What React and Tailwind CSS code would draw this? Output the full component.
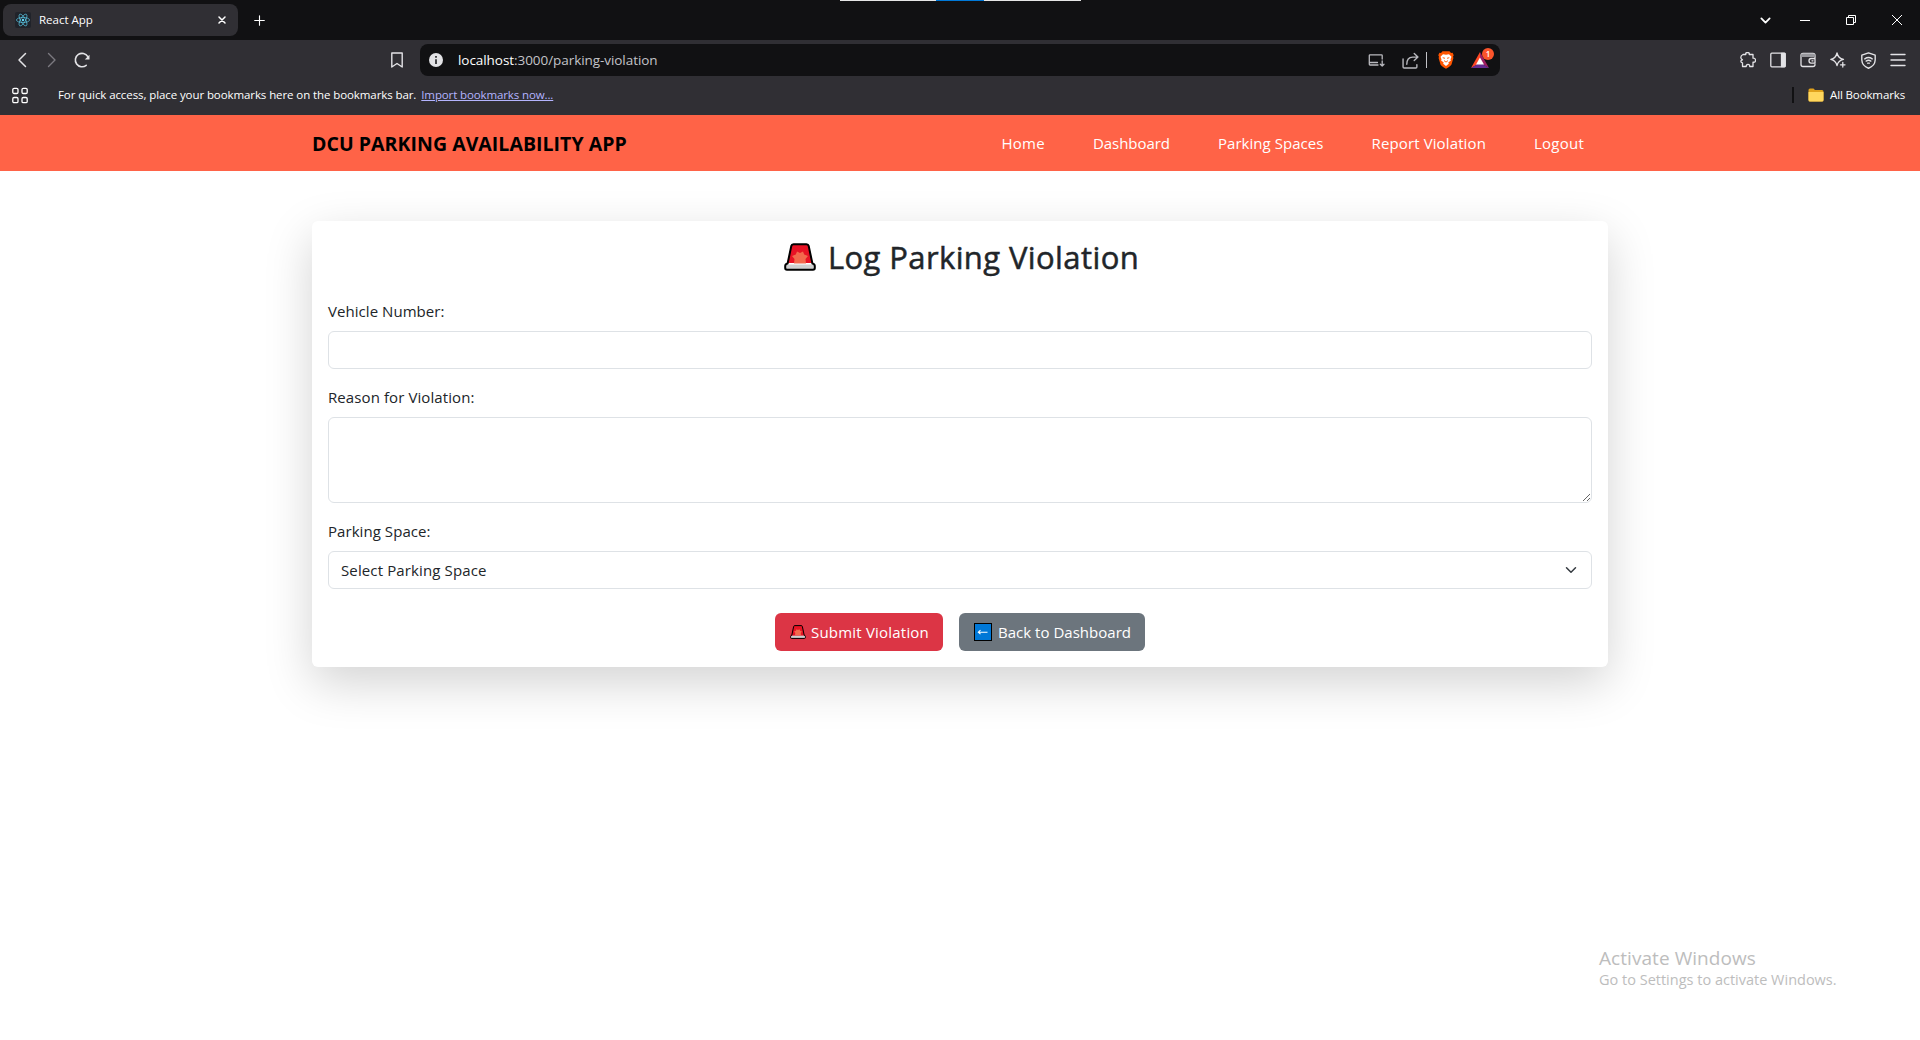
import React from "react";

const T = ({ className = "", children }) => (
  <span className={"inline-block whitespace-nowrap " + className}>{children}</span>
);

function Siren({ className }) {
  return (
    <svg viewBox="0 0 32 28" className={className}>
      <path d="M7.2 2.2Q7.8 1 9.2 1H22.800Q24.200 1 24.800 2.200L28.700 20H3.300Z" fill="#e81224" />
      <path d="M13 8.500 16 10 19 8.500 20.200 11.500 24 13 21.500 16 22 20.500H10L10.500 16 8 13 11.800 11.500Z" fill="#f3694c" />
      <path d="M1.800 21.500H30.200V26H1.800Z" fill="#d0d0d0" />
      <path d="M3.600 20.500 7.300 3Q7.700 1.200 9.500 1.200H22.500Q24.300 1.200 24.700 3L28.400 20.500Q30.800 21 30.800 23V25Q30.800 26.800 29 26.800H3Q1.200 26.800 1.200 25V23Q1.200 21 3.600 20.500Z" fill="none" stroke="#000" strokeWidth="2" strokeLinejoin="round" />
    </svg>
  );
}

function BackArrow() {
  return (
    <svg viewBox="0 0 18 18" className="h-[18px] w-[18px]">
      <rect x=".5" y=".5" width="17" height="17" fill="#0078d7" stroke="#000" />
      <path d="M4.300 9.200H13.500M6.500 7.200 4.300 9.200 6.500 11.200" fill="none" stroke="#fff" strokeWidth="1.100" />
    </svg>
  );
}

function Icon({ className = "h-4 w-4", children, sw = 1.3 }) {
  return (
    <svg viewBox="0 0 16 16" className={"shrink-0 " + className} fill="none" stroke="currentColor" strokeWidth={sw} strokeLinecap="round" strokeLinejoin="round">
      {children}
    </svg>
  );
}

const Cell = ({ children, className = "" }) => (
  <div className={"flex h-8 w-[30px] shrink-0 items-center justify-center " + className}>{children}</div>
);

function TabStrip() {
  return (
    <div className="flex h-10 items-center bg-[#111113] pl-[3px] text-white">
      <div className="flex h-8 w-[235px] items-center rounded-lg bg-[#302f34] pl-3 pr-[12px]">
        <svg viewBox="0 0 16 16" className="h-4 w-4 rounded-xs bg-[#20232a]" fill="none" stroke="#61dafb" strokeWidth=".7" strokeOpacity=".85">
          <ellipse cx="8" cy="8" rx="6.600" ry="2.500" />
          <ellipse cx="8" cy="8" rx="6.600" ry="2.500" transform="rotate(60 8 8)" />
          <ellipse cx="8" cy="8" rx="6.600" ry="2.500" transform="rotate(120 8 8)" />
          <circle cx="8" cy="8" r="1.200" fill="#61dafb" stroke="none" />
        </svg>
        <T className="ml-2 text-[11.5px] leading-4">React App</T>
        <Icon className="ml-auto h-2 w-2" sw={3}><path d="M2 2 14 14M14 2 2 14" /></Icon>
      </div>
      <Icon className="ml-[16px] h-[11px] w-[11px]" sw={1.6}><path d="M8 1V15M1 8H15" /></Icon>
      <div className="mb-auto ml-[575px] flex h-px w-[241px] bg-[#e6e6e6]"><div className="ml-24 w-12 bg-[#0078d7]" /></div>
      <Icon className="ml-[679px] h-[11px] w-[11px]" sw={2.6}><path d="M2 5 8 11 14 5" /></Icon>
      <div className="ml-[29px] h-px w-[10px] bg-white" />
      <svg viewBox="0 0 10 10" className="ml-9 h-[10px] w-[10px]" fill="none" stroke="#fff"><path d="M.5 2.500H7.500V9.500H.5ZM2.500 2.500V.5H9.500V7.500H7.500" /></svg>
      <svg viewBox="0 0 10 10" className="ml-9 h-[10px] w-[10px]" fill="none" stroke="#fff"><path d="M0 0 10 10M10 0 0 10" /></svg>
    </div>
  );
}

function BraveLion() {
  return (
    <svg viewBox="0 0 16 18" className="h-[18px] w-4">
      <path d="M4.500.3H11.500L13 2 14.600 1.800 15.700 4.200 15 5.800 15.400 7 13.500 13.500Q13 14.800 8 17.800 3 14.800 2.500 13.500L.6 7 1 5.800.3 4.200 1.400 1.800 3 2Z" fill="#ff5500" />
      <path d="M5 3.300 8 3.700 11 3.300 13.500 5.800 12.500 8.200 12.800 9.800 10.400 11.300 10.800 12.800 8 15 5.200 12.800 5.600 11.300 3.200 9.800 3.500 8.200 2.500 5.800Z" fill="#fff" />
      <path d="M4.700 6.700 7 7.300M11.300 6.700 9 7.300M6 9.600 8 11.100 10 9.600" fill="none" stroke="#ff5500" strokeWidth=".9" />
    </svg>
  );
}

function Toolbar() {
  return (
    <div className="flex h-10 items-center bg-[#302f34] px-[7px] text-[#e3e3e6]">
      <Cell><Icon className="mr-px h-4 w-4" sw={1.5}><path d="M11.500 1.500 5 8 11.500 14.500" /></Icon></Cell>
      <Cell className="text-[#7b7a80]"><Icon sw={1.400}><path d="M4.500 1.500 11 8 4.500 14.500" /></Icon></Cell>
      <Cell>
        <Icon sw={1.6}><path d="M12.200 13.300A6.700 6.700 0 1 1 13.800 4.600" /><path d="M15.500 2.800V7.600H10.800Z" fill="currentColor" stroke="none" /></Icon>
      </Cell>
      <Cell className="ml-[285px]"><Icon sw={1.400}><path d="M2.800 1H13.200V15L8 11.500 2.800 15Z" /></Icon></Cell>
      <div className="ml-2 flex h-8 w-[1080px] items-center rounded-lg bg-[#111113] pl-2">
        <svg viewBox="0 0 16 16" className="h-4 w-4"><circle cx="8" cy="8" r="7" fill="#e3e3e6" /><path d="M8 4V5.800M8 7.200V12" stroke="#111113" strokeWidth="1.500" /></svg>
        <T className="ml-[14px] text-[13.5px] leading-5 tracking-[-0.06px] text-[#c3c3c8]"><span className="text-white">localhost</span>:3000/parking-violation</T>
        <div className="ml-auto flex items-center pr-[11px] text-[#b9b9be]">
          <Icon className="h-4 w-[17px]"><path d="M9.500 13H1.500Q.8 13 .8 12.300V3.500Q.8 2.800 1.500 2.800H13Q13.700 2.800 13.700 3.500V7M1 10.500H9M13.700 9V14M11.800 12.200 13.700 14 15.500 12.200" /></Icon>
          <Icon className="ml-[17px] h-[17px] w-[17px]"><path d="M1 6.500V14Q1 15 2 15H13Q14 15 14 14V12M4.500 11.500Q4.500 5 10 4.800H14.500M11.500 1.500 15 4.800 11.500 8" /></Icon>
          <div className="ml-[7px] h-4 w-px bg-[#c3c3c8]" />
          <div className="ml-[11px]"><BraveLion /></div>
          <div className="relative ml-[17px] h-[16px] w-[18px]">
            <svg viewBox="0 0 18 16" className="h-4 w-[18px]">
              <path d="M9 0 0 16 9 11Z" fill="#ff4724" /><path d="M9 0 18 16 9 11Z" fill="#9e1f63" /><path d="M0 16H18L9 10.500Z" fill="#662d91" /><path d="M9 5.500 13 12.500H5Z" fill="#fff" />
            </svg>
            <span className="absolute -top-1 left-[11px] flex h-3 w-3 items-center justify-center rounded-full bg-[#fb542b] text-[8px] font-semibold leading-3 text-white">1</span>
          </div>
        </div>
      </div>
      <div className="ml-auto flex">
        <Cell><Icon><path d="M3 2.500H5.800Q5.300.5 7.500.5T9.200 2.500H13V6.200Q15.500 6 15.500 8.300T13 10.200V14.500H9.700Q9.800 12.300 8 12.300T6.200 14.500H2.500V10.800Q.5 10.500 1 9 1 8 2.500 7.800Q.8 6.800.8 5.500.8 3.500 3 2.500Z" /></Icon></Cell>
        <Cell><Icon><rect x=".8" y="1.200" width="14.400" height="13.600" rx="1" /><path d="M11.500 1.500H15V14.500H11.500Z" fill="currentColor" /></Icon></Cell>
        <Cell><Icon><path d="M15 6V3.500Q15 1.500 13 1.500H3Q1 1.500 1 3.500V12.500Q1 14.500 3 14.500H13Q15 14.500 15 12.500M15 6.500H11Q9 6.500 9 8.800T11 11.200H15ZM12 8.800H13" /><path d="M1 5V3Q1 1.500 3 1.500H13Q15 1.500 15 3V5Z" fill="#98989d" stroke="none" /></Icon></Cell>
        <Cell><Icon><path d="M7 1Q8.200 6.400 13.500 7.300 8.200 8.400 7 13.500 5.800 8.400.8 7.300 5.800 6.400 7 1ZM12.800 10.500V15M10.500 12.800H15" /></Icon></Cell>
        <Cell><Icon className="h-[17px] w-[17px]"><path d="M8 .8 14.300 3V7.500Q14 13 8 15.300 2 13 1.700 7.500V3ZM4.500 6.500Q8 4 11.500 6.500M5.800 8.600Q8 7 10.200 8.600M7.200 10.500H8.800" /></Icon></Cell>
        <Cell><Icon sw={1.400}><path d="M1 2.500H15M1 8H15M1 13.500H15" /></Icon></Cell>
      </div>
    </div>
  );
}

function BookmarksBar() {
  return (
    <div className="flex h-[35px] items-center bg-[#302f34] pb-[5px] pl-3 pr-[15px] text-[11.5px] leading-4 text-white">
      <Icon className="h-[17px] w-4" sw={1.300}>
        <rect x=".8" y=".8" width="5.200" height="5.200" rx="1.300" /><rect x="10" y=".8" width="5.200" height="5.200" rx="1.300" /><rect x=".8" y="10" width="5.200" height="5.200" rx="1.300" /><rect x="10" y="10" width="5.200" height="5.200" rx="1.300" />
      </Icon>
      <T className="ml-[30px] tracking-[-0.092px]">For quick access, place your bookmarks here on the bookmarks bar.</T>
      <T className="ml-[5px] tracking-[-0.118px] text-[#b4b4ff] underline">Import bookmarks now...</T>
      <div className="ml-auto h-4 w-[2px] bg-[#111113]" />
      <svg viewBox="0 0 16 14" className="ml-[14px] h-[14px] w-4"><path d="M.5 2Q.5.5 2 .5H5.500L7 2H14Q15.500 2 15.500 3.500V12Q15.500 13.500 14 13.500H2Q.5 13.500.5 12Z" fill="#e0a21c" /><path d="M.5 4H15.500V12Q15.500 13.500 14 13.500H2Q.5 13.500.5 12Z" fill="#ffd75e" /></svg>
      <T className="ml-[6px] tracking-[-0.126px]">All Bookmarks</T>
    </div>
  );
}

function Navbar() {
  return (
    <nav className="flex h-14 items-center justify-between bg-[#ff6347] pl-[312px] pr-[336px] text-[15px] leading-6 text-white">
      <T className="pt-0.5 text-[19.5px] font-bold tracking-[0.04px] text-black">DCU PARKING AVAILABILITY APP</T>
      <div className="flex gap-12">
        <T className="tracking-[0.27px]">Home</T>
        <T className="tracking-[-0.047px]">Dashboard</T>
        <T className="tracking-[0.044px]">Parking Spaces</T>
        <T className="tracking-[0.125px]">Report Violation</T>
        <T className="tracking-[0.237px]">Logout</T>
      </div>
    </nav>
  );
}

export default function App() {
  return (
    <div className="flex h-[1040px] w-[1920px] flex-col overflow-hidden bg-white font-['Open_Sans',sans-serif]">
      <TabStrip />
      <Toolbar />
      <BookmarksBar />
      <Navbar />
      <main className="mx-auto mt-[50px] flex w-[1296px] flex-col rounded-md bg-white p-4 text-[15px] leading-6 text-[#212529] shadow-[0_16px_48px_rgba(0,0,0,0.175)]">
        <h2 className="mb-6 flex h-[38px] items-center justify-center pl-[3px] text-[31px] font-medium leading-[38px]">
          <Siren className="mt-0.5 mr-[12px] h-7 w-8" />
          <T className="pt-0.5 tracking-[0.4px] [-webkit-text-stroke:0.5px_#212529]">Log Parking Violation</T>
        </h2>
        <label className="mb-2 tracking-[0.053px]">Vehicle Number:</label>
        <input className="mb-4 h-[38px] rounded-md border border-[#dee2e6]" />
        <label className="mb-2 tracking-[0.092px]">Reason for Violation:</label>
        <textarea className="mb-4 h-[86px] resize-y rounded-md border border-[#dee2e6]" />
        <label className="mb-2 tracking-[0.058px]">Parking Space:</label>
        <div className="mb-6 flex h-[38px] items-center justify-between rounded-md border border-[#dee2e6] px-3">
          <T className="tracking-[0.123px]">Select Parking Space</T>
          <svg viewBox="0 0 16 16" className="h-3 w-4" fill="none" stroke="#343a40" strokeWidth="2" strokeLinecap="round" strokeLinejoin="round"><path d="m2 5 6 6 6-6" /></svg>
        </div>
        <div className="flex justify-center gap-4 text-white">
          <button className="flex h-[38px] w-[168px] items-center rounded-md bg-[#dc3545] pl-[15px]">
            <Siren className="mr-[5px] h-[14px] w-4" />
            <T className="tracking-[0.203px]">Submit Violation</T>
          </button>
          <button className="flex h-[38px] w-[186px] items-center rounded-md bg-[#6c757d] pl-[15px]">
            <BackArrow />
            <T className="ml-[6px] tracking-[0.019px]">Back to Dashboard</T>
          </button>
        </div>
      </main>
      <div className="mt-auto mb-[50px] ml-[1599px] flex flex-col items-start text-[#bdbdbd]">
        <T className="text-[19px] leading-6 tracking-[0.06px]">Activate Windows</T>
        <T className="text-[14.5px] leading-5">Go to Settings to activate Windows.</T>
      </div>
    </div>
  );
}
